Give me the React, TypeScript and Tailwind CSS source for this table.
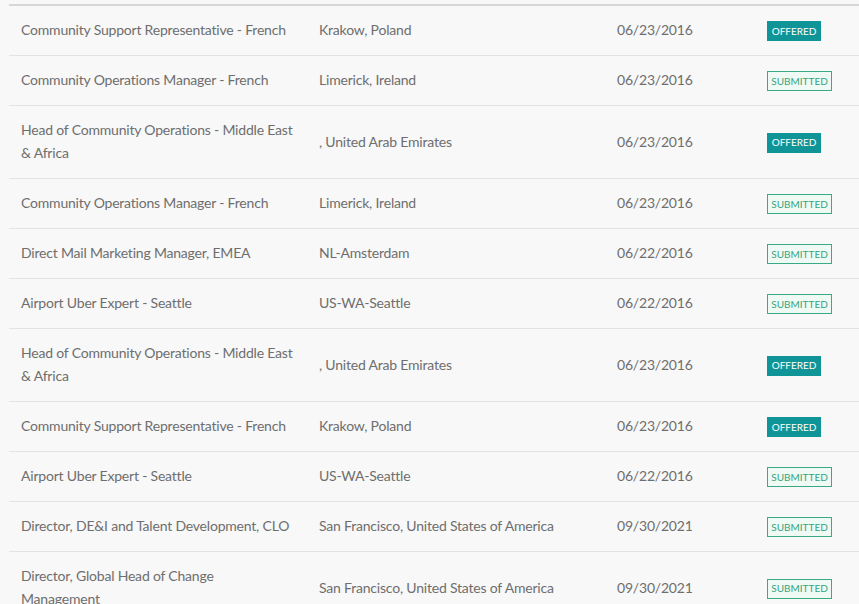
const rows = [
  { title: "Community Support Representative - French", place: "Krakow, Poland", date: "06/23/2016", status: "OFFERED" },
  { title: "Community Operations Manager - French", place: "Limerick, Ireland", date: "06/23/2016", status: "SUBMITTED" },
  { title: "Head of Community Operations - Middle East & Africa", place: ", United Arab Emirates", date: "06/23/2016", status: "OFFERED" },
  { title: "Community Operations Manager - French", place: "Limerick, Ireland", date: "06/23/2016", status: "SUBMITTED" },
  { title: "Direct Mail Marketing Manager, EMEA", place: "NL-Amsterdam", date: "06/22/2016", status: "SUBMITTED" },
  { title: "Airport Uber Expert - Seattle", place: "US-WA-Seattle", date: "06/22/2016", status: "SUBMITTED" },
  { title: "Head of Community Operations - Middle East & Africa", place: ", United Arab Emirates", date: "06/23/2016", status: "OFFERED" },
  { title: "Community Support Representative - French", place: "Krakow, Poland", date: "06/23/2016", status: "OFFERED" },
  { title: "Airport Uber Expert - Seattle", place: "US-WA-Seattle", date: "06/22/2016", status: "SUBMITTED" },
  { title: "Director, DE&I and Talent Development, CLO", place: "San Francisco, United States of America", date: "09/30/2021", status: "SUBMITTED" },
  { title: "Director, Global Head of Change Management", place: "San Francisco, United States of America", date: "09/30/2021", status: "SUBMITTED" },
];

const Badge = ({ status }: { status: string }) =>
  status === "OFFERED" ? (
    <span className="inline-flex h-5 w-[54px] items-center justify-center bg-[#0f9498] text-[10px] tracking-normal text-white">
      OFFERED
    </span>
  ) : (
    <span className="inline-flex h-5 w-[65px] items-center justify-center border border-[#3aaa86] bg-[#effaf5] text-[10px] tracking-normal text-[#37a37e]">
      SUBMITTED
    </span>
  );

export default function App() {
  return (
    <div className="min-h-screen bg-[#f8f8f8] pt-1 pl-[9px] font-['Lato',sans-serif] text-[14px] leading-[23px] tracking-[-0.2px] text-[#6e6e6e]">
      <div className="border-t-2 border-[#d6d6d6]">
        {rows.map((r, i) => (
          <div key={i} className="flex items-center border-b border-[#e3e3e3]">
            <div className="w-[298px] shrink-0 pt-[12px] pb-[14px] pr-3 pl-3">{r.title}</div>
            <div className="w-[298px] shrink-0 px-3 pb-[2px]">{r.place}</div>
            <div className="w-[150px] shrink-0 px-3 pb-[2px]">{r.date}</div>
            <div className="flex-1 px-3 pb-[2px]">
              <Badge status={r.status} />
            </div>
          </div>
        ))}
      </div>
    </div>
  );
}
